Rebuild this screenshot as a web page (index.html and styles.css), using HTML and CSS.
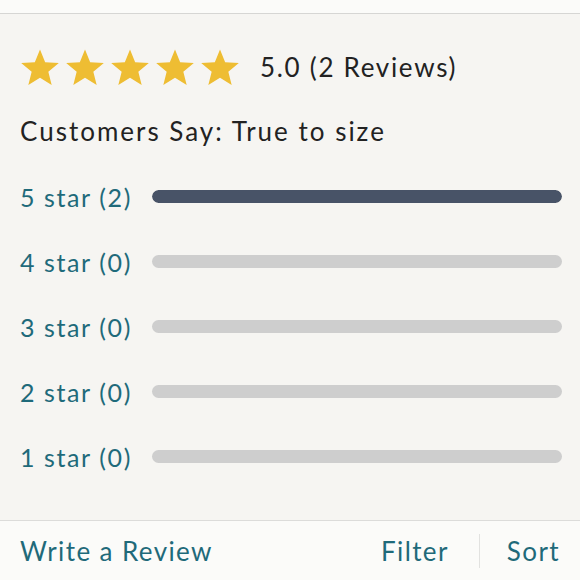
FILE: index.html
```html
<!DOCTYPE html>
<html>
<head>
  <meta charset="UTF-8">
  <link rel="stylesheet" href="styles.css">
</head>
<body>
  <div class="topbar"></div>
  <div class="reviews">
    <div class="summary">
      <div class="stars">
        <svg class="star" viewBox="0 0 24 24"><path d="M12 1.5l3.1 7.6 8.2.5-6.3 5.2 2 8-7-4.4-7 4.4 2-8L.7 9.6l8.2-.5z"/></svg>
        <svg class="star" viewBox="0 0 24 24"><path d="M12 1.5l3.1 7.6 8.2.5-6.3 5.2 2 8-7-4.4-7 4.4 2-8L.7 9.6l8.2-.5z"/></svg>
        <svg class="star" viewBox="0 0 24 24"><path d="M12 1.5l3.1 7.6 8.2.5-6.3 5.2 2 8-7-4.4-7 4.4 2-8L.7 9.6l8.2-.5z"/></svg>
        <svg class="star" viewBox="0 0 24 24"><path d="M12 1.5l3.1 7.6 8.2.5-6.3 5.2 2 8-7-4.4-7 4.4 2-8L.7 9.6l8.2-.5z"/></svg>
        <svg class="star" viewBox="0 0 24 24"><path d="M12 1.5l3.1 7.6 8.2.5-6.3 5.2 2 8-7-4.4-7 4.4 2-8L.7 9.6l8.2-.5z"/></svg>
      </div>
      <span class="score">5.0 (2 Reviews)</span>
    </div>
    <p class="fit">Customers Say: True to size</p>
    <ul class="breakdown">
      <li class="row"><span class="label">5 star (2)</span><div class="bar"><div class="fill" style="width: 100%"></div></div></li>
      <li class="row"><span class="label">4 star (0)</span><div class="bar"><div class="fill" style="width: 0%"></div></div></li>
      <li class="row"><span class="label">3 star (0)</span><div class="bar"><div class="fill" style="width: 0%"></div></div></li>
      <li class="row"><span class="label">2 star (0)</span><div class="bar"><div class="fill" style="width: 0%"></div></div></li>
      <li class="row"><span class="label">1 star (0)</span><div class="bar"><div class="fill" style="width: 0%"></div></div></li>
    </ul>
  </div>
  <div class="actions">
    <a class="action">Write a Review</a>
    <div class="action-right">
      <a class="action">Filter</a>
      <span class="divider"></span>
      <a class="action">Sort</a>
    </div>
  </div>
</body>
</html>
```

FILE: styles.css
```css
body { margin: 0; font-family: Lato, "Noto Sans", sans-serif; background: #f6f5f2; color: #222; width: 580px; height: 580px; overflow: hidden; }
.topbar { height: 13px; background: #fbfbf9; border-bottom: 1px solid #d6d6d4; }
.reviews { padding: 33px 18px 0 20px; height: 473px; }
.summary { display: flex; align-items: center; height: 40px; }
.stars { display: flex; gap: 5px; }
.star { width: 40px; height: 40px; fill: #eebd33; display: block; }
.score { margin-left: 20px; font-size: 26px; letter-spacing: 1.7px; }
.fit { margin: 28px 0 0; font-size: 26px; line-height: 32px; letter-spacing: 2px; }
.breakdown { list-style: none; margin: 17px 0 0; padding: 0; }
.row { display: flex; align-items: center; height: 65px; }
.label { width: 132px; color: #1f6a7a; font-size: 25px; letter-spacing: 1.6px; }
.bar { flex: 1; height: 13px; background: #cecece; border-radius: 7px; overflow: hidden; }
.fill { height: 100%; background: #485367; border-radius: 7px; }
.actions { display: flex; justify-content: space-between; align-items: center; height: 59px; background: #fbfbf9; border-top: 1px solid #dcdcda; padding: 0 20px; }
.action { color: #1f6a7a; font-size: 26px; letter-spacing: 1.4px; }
.action-right { display: flex; align-items: center; }
.divider { width: 1px; height: 34px; background: #e2e2e0; margin: 0 27px 0 30px; }
```
